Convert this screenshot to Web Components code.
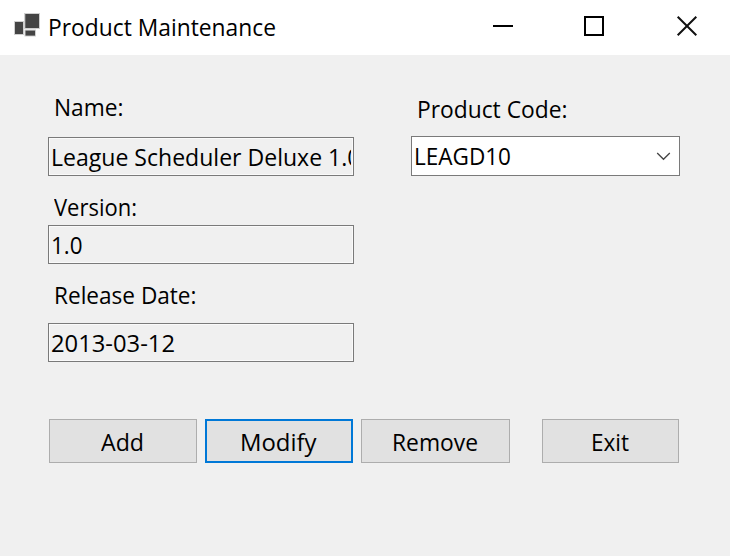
<!DOCTYPE html>
<html lang="en"><head><meta charset="utf-8"><title>Product Maintenance</title>
<style>html,body{margin:0;height:100%;overflow:hidden;background:#f0f0f0}</style></head>
<body><product-window></product-window>
<script>
// Single-line text condensed or stretched to an exact advance width.
class FitText extends HTMLElement {
  connectedCallback() {
    const root = this.attachShadow({mode: 'open'});
    const w = +this.getAttribute('width');
    root.innerHTML = `<style>
      :host{display:block;flex:none;width:${w}px;height:32px;line-height:32px;white-space:nowrap}
      span{display:inline-block;transform-origin:0 0}
    </style><span></span>`;
    const s = root.querySelector('span');
    s.textContent = this.getAttribute('text');
    s.style.transform = `scaleX(${w / s.getBoundingClientRect().width})`;
  }
}
class TitleBar extends HTMLElement {
  connectedCallback() {
    this.attachShadow({mode: 'open'}).innerHTML = `<style>
      :host{display:flex;height:55px;background:#fff;box-sizing:border-box;padding:11px 31px 0 14px;align-items:flex-start}
      .app{width:28px;height:26px;margin:1px 6px 0 0}
      nav{margin-left:auto;display:flex;gap:68px;padding-top:4px}
      svg{display:block;flex:none}
    </style>
    <svg class="app" viewBox="14 12 28 26">
      <g fill="#cfcfcf"><rect x="14" y="21" width="10" height="14"/><rect x="24" y="13" width="16" height="16"/><rect x="24.5" y="29.5" width="11.5" height="7"/></g>
      <g fill="#444"><rect x="15" y="22" width="8" height="12"/><rect x="25.3" y="14" width="13.7" height="14"/><rect x="25.5" y="30.6" width="9.5" height="5"/></g></svg>
    <slot></slot>
    <nav>
      <svg width="23" height="22" viewBox="492 15 23 22"><path d="M493 26H513" stroke="#000" stroke-width="2"/></svg>
      <svg width="24" height="22" viewBox="583 15 24 22"><path d="M585 17H603V35H585Z" fill="none" stroke="#000" stroke-width="2"/></svg>
      <svg width="24" height="22" viewBox="675 15 24 22"><path d="M677.7 16.7L696.3 35.3M696.3 16.7L677.7 35.3" stroke="#111" stroke-width="2"/></svg>
    </nav>`;
  }
}
class TextField extends HTMLElement {
  connectedCallback() {
    this.attachShadow({mode: 'open'}).innerHTML = `<style>
      :host{display:block;box-sizing:border-box;width:306px;height:39px;border:1px solid #7a7a7a;box-shadow:inset 0 0 0 1px #fafafa;padding:3px 2px 0}
      div{overflow:hidden;height:33px}
    </style><div><slot></slot></div>`;
  }
}
class ComboBox extends HTMLElement {
  connectedCallback() {
    this.attachShadow({mode: 'open'}).innerHTML = `<style>
      :host{display:flex;box-sizing:border-box;width:269px;height:40px;border:1px solid #7a7a7a;background:#fff;padding:3px 8px 0 2px;justify-content:space-between}
      svg{margin-top:12px}
    </style><slot></slot>
    <svg width="15" height="9" viewBox="0 0 15 9"><path d="M1.2 1L7.5 7.3L13.8 1" fill="none" stroke="#444" stroke-width="1.3"/></svg>`;
  }
}
class PushButton extends HTMLElement {
  connectedCallback() {
    this.attachShadow({mode: 'open'}).innerHTML = `<style>
      :host{display:flex;justify-content:center;box-sizing:border-box;height:44px;padding-top:6px;padding-right:2px;border:1px solid #adadad;background:#e1e1e1}
      :host([focused]){border:2px solid #0078d7;padding-top:5px}
    </style><slot></slot>`;
  }
}
class ProductWindow extends HTMLElement {
  connectedCallback() {
    this.attachShadow({mode: 'open'}).innerHTML = `<style>
      :host{display:block;width:730px;height:556px;background:#f0f0f0;color:#000;font:24px "Open Sans","Noto Sans",sans-serif}
      main{display:grid;grid-template-columns:306px 269px;column-gap:57px;padding:0 0 0 48px}
      section{display:flex;flex-direction:column}
      footer{display:grid;grid-template-columns:148px 148px 149px 137px;column-gap:8px;padding:57px 0 0 49px}
      .exit{margin-left:24px;width:137px}
    </style>
    <title-bar><fit-text text="Product Maintenance" width="228"></fit-text></title-bar>
    <main>
      <section>
        <fit-text style="margin:36px 0 14px 6px" text="Name:" width="69.5"></fit-text>
        <text-field><fit-text text="League Scheduler Deluxe 1.0" width="309.5"></fit-text></text-field>
        <fit-text style="margin:15px 0 2px 6px" text="Version:" width="83"></fit-text>
        <text-field><fit-text text="1.0" width="31.5"></fit-text></text-field>
        <fit-text style="margin:15px 0 12px 6px" text="Release Date:" width="142.5"></fit-text>
        <text-field><fit-text text="2013-03-12" width="124"></fit-text></text-field>
      </section>
      <section>
        <fit-text style="margin:38px 0 11px 6px" text="Product Code:" width="150.5"></fit-text>
        <combo-box><fit-text text="LEAGD10" width="97"></fit-text></combo-box>
      </section>
    </main>
    <footer>
      <push-button><fit-text text="Add" width="43"></fit-text></push-button>
      <push-button focused><fit-text text="Modify" width="76.5"></fit-text></push-button>
      <push-button><fit-text text="Remove" width="86"></fit-text></push-button>
      <push-button class="exit"><fit-text text="Exit" width="38"></fit-text></push-button>
    </footer>`;
  }
}
customElements.define('fit-text', FitText);
customElements.define('title-bar', TitleBar);
customElements.define('text-field', TextField);
customElements.define('combo-box', ComboBox);
customElements.define('push-button', PushButton);
customElements.define('product-window', ProductWindow);
</script></body></html>
